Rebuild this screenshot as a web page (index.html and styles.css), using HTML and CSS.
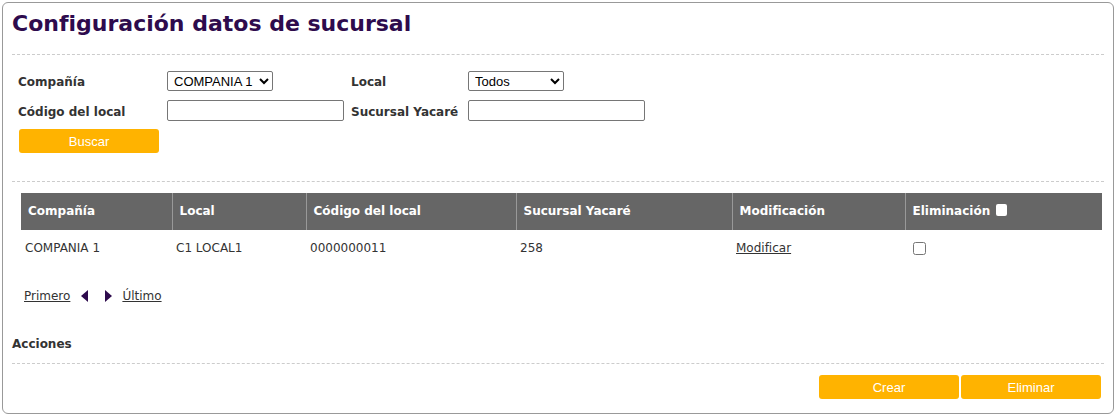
FILE: index.html
```html
<!DOCTYPE html>
<html lang="es">
<head>
    <meta charset="UTF-8">
    <title>Configuración datos de sucursal</title>
    <link rel="stylesheet" href="styles.css">
</head>
<body>
    <div class="panel">
        <h1 class="title">Configuración datos de sucursal</h1>
        <div class="divider"></div>

        <form class="search-form">
            <div class="fields">
                <label for="compania">Compañía</label>
                <select id="compania" class="sel-compania">
                    <option>COMPANIA 1</option>
                </select>
                <label for="local">Local</label>
                <select id="local" class="sel-local">
                    <option>Todos</option>
                </select>

                <label for="codigo">Código del local</label>
                <input type="text" id="codigo">
                <label for="sucursal">Sucursal Yacaré</label>
                <input type="text" id="sucursal">
            </div>
            <button type="button" class="btn btn-search">Buscar</button>
        </form>

        <div class="divider"></div>

        <table class="results">
            <thead>
                <tr>
                    <th class="c1">Compañía</th>
                    <th class="c2">Local</th>
                    <th class="c3">Código del local</th>
                    <th class="c4">Sucursal Yacaré</th>
                    <th class="c5">Modificación</th>
                    <th class="c6">Eliminación <span class="head-check"></span></th>
                </tr>
            </thead>
            <tbody>
                <tr>
                    <td>COMPANIA 1</td>
                    <td>C1 LOCAL1</td>
                    <td>0000000011</td>
                    <td>258</td>
                    <td><a href="#">Modificar</a></td>
                    <td><input type="checkbox" class="row-check"></td>
                </tr>
            </tbody>
        </table>

        <div class="pager">
            <a href="#">Primero</a>
            <span class="arrow arrow-left"></span>
            <span class="arrow arrow-right"></span>
            <a href="#">Último</a>
        </div>

        <h2 class="section-title">Acciones</h2>
        <div class="divider"></div>

        <div class="actions">
            <button type="button" class="btn">Crear</button>
            <button type="button" class="btn">Eliminar</button>
        </div>
    </div>
</body>
</html>
```

FILE: styles.css
```css
body { margin: 0; font-family: "DejaVu Sans", Verdana, sans-serif; color: #333; background: #fff; }
.panel { margin: 2px; height: 412px; box-sizing: border-box; border: 1px solid #999; border-radius: 6px; padding: 0 9px; }
.title { margin: 0; padding-top: 7px; height: 51px; box-sizing: border-box; font-size: 22px; line-height: 28px; font-weight: bold; color: #2e0b4d; }
.divider { border-top: 1px dashed #ccc; }

.search-form { padding: 16px 0 0 6px; height: 126px; box-sizing: border-box; }
.fields { display: grid; grid-template-columns: 149px 184px 117px auto; grid-template-rows: 20px 21px; row-gap: 9px; align-items: center; }
.fields label { font-size: 12px; font-weight: bold; color: #333; padding-top: 2px; }
.fields select, .fields input { font-family: "Liberation Sans", Arial, sans-serif; font-size: 13px; color: #000; border: 1px solid #767676; border-radius: 2px; background: #fff; box-sizing: border-box; margin: 0; }
.fields select { height: 20px; padding: 0 0 0 2px; }
.fields input { width: 177px; height: 21px; padding: 1px 2px; }
.sel-compania { width: 106px; }
.sel-local { width: 96px; }

.btn { width: 140px; height: 24px; border: none; border-radius: 3px; background: #ffb300; color: #fff; font-family: "Liberation Sans", Arial, sans-serif; font-size: 13px; padding: 0; cursor: pointer; }
.btn-search { margin: 8px 0 0 1px; display: block; }

.results { margin: 11px 1px 0 9px; width: 1081px; border-collapse: collapse; table-layout: fixed; font-size: 12px; }
.results th { box-sizing: border-box; background: #666; color: #fff; font-weight: bold; text-align: left; height: 37px; padding: 0 0 2px 7px; border-left: 1px solid #999; }
.results th:first-child { border-left: none; }
.results td { height: 36px; padding: 0 0 0 4px; color: #333; }
.results a { color: #333; }
.c1 { width: 151px; }
.c2 { width: 134px; }
.c3 { width: 210px; }
.c4 { width: 216px; }
.c5 { width: 173px; }
.head-check { display: inline-block; width: 11px; height: 12px; margin-left: 2px; background: #fff; border-radius: 2px; vertical-align: -1px; }
.row-check { margin: 0 0 0 4px; width: 13px; height: 13px; vertical-align: middle; }

.pager { display: flex; align-items: center; margin: 21px 0 0 12px; font-size: 12px; height: 18px; }
.pager a { color: #333; }
.arrow { width: 0; height: 0; border-top: 6px solid transparent; border-bottom: 6px solid transparent; }
.arrow-left { border-right: 7px solid #2e0b4d; margin: 0 0 0 11px; }
.arrow-right { border-left: 7px solid #2e0b4d; margin: 0 10px 0 17px; }

.section-title { margin: 0; padding-top: 31px; height: 58px; box-sizing: border-box; font-size: 12px; line-height: 16px; font-weight: bold; color: #333; }

.actions { display: flex; justify-content: flex-end; gap: 2px; padding: 11px 3px 0 0; }
```
